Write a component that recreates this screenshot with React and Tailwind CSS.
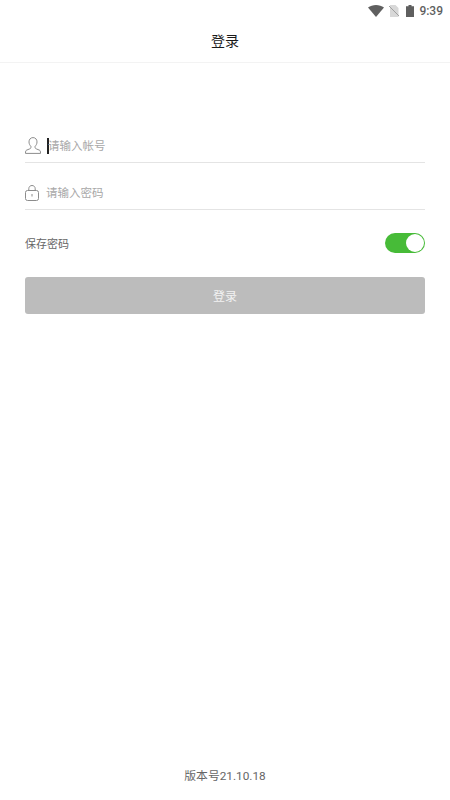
const font = { fontFamily: '"Noto Sans CJK SC", Roboto, sans-serif' };

function StatusBar() {
  return (
    <div className="flex h-[22px] items-center justify-end pr-[7px] text-[#5f5f5f]">
      <svg width="16" height="12" viewBox="0 0 16 12" className="mr-[5px]">
        <path d="M0 2.600C2.200.9 5 0 8 0s5.800.9 8 2.600L8 12z" fill="#5f5f5f" />
      </svg>
      <svg width="10" height="12" viewBox="0 0 10 12" className="mr-[7px]">
        <path d="M1 0h5.500L9.500 3v9H1z" fill="#d8d8d8" />
        <path d="M0 1l10 10" stroke="#a0a0a0" strokeWidth="1" />
      </svg>
      <svg width="8" height="12" viewBox="0 0 8 12" className="mr-[5px]">
        <path d="M2.500 0h3v1.300H8V12H0V1.300h2.500z" fill="#5f5f5f" />
      </svg>
      <span className="text-[12px] leading-none font-medium" style={{ fontFamily: "Roboto, sans-serif" }}>9:39</span>
    </div>
  );
}

function UserIcon() {
  return (
    <svg width="16" height="17" viewBox="0 0 16 17" fill="none" stroke="#8c8c8c" strokeWidth="1">
      <path d="M8 .6c-2.500 0-4 1.900-4 4.300 0 1.900.8 3.400 1.900 4.300v1.300c0 .7-.5 1.100-1.500 1.500L1.500 13.200C.8 13.500.5 14.200.5 16.400h15c0-2.200-.3-2.900-1-3.200l-2.900-1.200c-1-.4-1.500-.8-1.500-1.500V9.200C11.200 8.300 12 6.800 12 4.900 12 2.500 10.500.6 8 .6z" />
    </svg>
  );
}

function LockIcon() {
  return (
    <svg width="14" height="16" viewBox="0 0 14 16" fill="none" stroke="#8c8c8c" strokeWidth="1">
      <rect x=".5" y="5.500" width="13" height="10" rx="2" />
      <path d="M3.800 5.500V3.700C3.800 1.800 5.200.5 7 .5s3.200 1.300 3.200 3.200v1.800" />
      <path d="M7 9v2.500" />
    </svg>
  );
}

export default function App() {
  return (
    <div className="flex h-[800px] w-[450px] flex-col bg-white" style={font}>
      <StatusBar />
      <div className="flex h-[41px] items-center justify-center border-b border-[#f3f3f3] pb-[4px] text-[14px] text-[#1a1a1a]">
        登录
      </div>

      <div className="flex flex-1 flex-col px-[25px] pt-[66px]">
        <div className="flex h-[34px] items-center border-b border-[#e4e4e4]">
          <div className="flex w-[22px] shrink-0 justify-start"><UserIcon /></div>
          <span className="mr-[-1px] h-[16px] w-[2px] bg-[#222]" />
          <span className="text-[11.500px] text-[#a8a8a8]">请输入帐号</span>
        </div>
        <div className="mt-[13px] flex h-[34px] items-center border-b border-[#e4e4e4]">
          <div className="flex w-[21px] shrink-0 justify-start"><LockIcon /></div>
          <span className="text-[11.500px] text-[#a8a8a8]">请输入密码</span>
        </div>

        <div className="mt-[23px] flex h-[20px] items-center justify-between">
          <span className="pt-[1px] text-[11px] text-[#666]">保存密码</span>
          <div className="flex h-[20px] w-[40px] items-center justify-end rounded-full bg-[#47bb38] pr-[1px]">
            <div className="h-[18px] w-[18px] rounded-full bg-white" />
          </div>
        </div>

        <div className="mt-[24px] flex h-[37px] items-center justify-center rounded-[3px] bg-[#bcbcbc] text-[12px] text-[#f2f2f2]">
          登录
        </div>

        <div className="mt-auto pb-[16px] text-center text-[11.800px] leading-[16px] text-[#666]" style={{ fontFamily: 'Roboto, "Noto Sans CJK SC", sans-serif' }}>版本号21.10.18</div>
      </div>
    </div>
  );
}
